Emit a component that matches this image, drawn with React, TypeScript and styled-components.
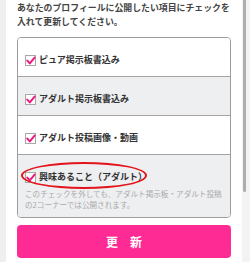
import React from "react";
import styled, { createGlobalStyle } from "styled-components";

const items = [
  { label: "ピュア掲示板書込み", shaded: false },
  { label: "アダルト掲示板書込み", shaded: true },
  { label: "アダルト投稿画像・動画", shaded: false },
];

const GlobalStyle = createGlobalStyle`
  html, body {
    margin: 0;
    padding: 0;
    background: #ffffff;
  }
  body {
    font-family: "Noto Sans CJK JP", "Noto Sans", sans-serif;
  }
`;

const CheckIcon: React.FC = () => (
  <svg width="11" height="11" viewBox="0 0 11 11">
    <rect x="0.5" y="0.5" width="10" height="10" fill="#fff" stroke="#a8a8a8" />
    <path
      d="M2.3 5.6 L4.8 8.4 L9.6 2.6"
      fill="none"
      stroke="#f0197d"
      strokeWidth="2"
      strokeLinecap="round"
      strokeLinejoin="round"
    />
  </svg>
);

export default function App() {
  return (
    <>
      <GlobalStyle />
      <Page>
        <Gutter />
        <Main>
          <Lead>
            あなたのプロフィールに公開したい項目にチェックを入れて更新してください。
          </Lead>
          <OptionBox>
            {items.map((item) => (
              <OptionRow key={item.label} $shaded={item.shaded}>
                <Label>
                  <CheckIcon />
                  <span>{item.label}</span>
                </Label>
              </OptionRow>
            ))}
            <OptionRow $shaded>
              <Label>
                <CheckIcon />
                <span>興味あること（アダルト）</span>
              </Label>
              <Note>
                このチェックを外しても、アダルト掲示板・アダルト投稿の2コーナーでは公開されます。
              </Note>
              <Circle />
            </OptionRow>
          </OptionBox>
          <SubmitButton type="button">更新</SubmitButton>
        </Main>
        <ScrollTrack>
          <ScrollThumb />
        </ScrollTrack>
      </Page>
    </>
  );
}

const Page = styled.div`
  display: flex;
  width: 250px;
  height: 262px;
  overflow: hidden;
`;

const Gutter = styled.div`
  width: 6px;
  flex-shrink: 0;
  background: #efefef;
`;

const Main = styled.div`
  flex: 1;
  padding: 1px 11px 0 11px;
  background: #fff;
`;

const Lead = styled.p`
  margin: 0 0 8px;
  font-size: 8.9px;
  line-height: 14px;
  font-weight: 700;
  color: #444;
`;

const OptionBox = styled.div`
  border: 1px solid #9c9c9c;
  border-radius: 4px;
  overflow: hidden;
`;

const OptionRow = styled.div<{ $shaded?: boolean }>`
  position: relative;
  padding: 16px 7px 10px;
  background: ${({ $shaded }) => ($shaded ? "#eeeff1" : "#fff")};
  border-top: 1px solid #a4a4a4;

  &:first-child {
    border-top: none;
  }

  &:last-child {
    padding-bottom: 7px;
  }
`;

const Label = styled.label`
  display: flex;
  align-items: center;
  gap: 3px;
  height: 12px;
  font-size: 9px;
  line-height: 12px;
  font-weight: 700;
  color: #333;
`;

const Note = styled.p`
  margin: 5px 0 0;
  font-size: 7.6px;
  line-height: 11px;
  color: #aaa;
`;

const Circle = styled.div`
  position: absolute;
  left: 3px;
  top: 7px;
  width: 122px;
  height: 23px;
  border: 2px solid #e3141c;
  border-radius: 50%;
  pointer-events: none;
`;

const SubmitButton = styled.button`
  display: block;
  width: 100%;
  height: 33px;
  margin-top: 7px;
  border: none;
  border-radius: 4px;
  background: #ff2b94;
  color: #fff;
  font-family: "Noto Sans CJK JP", sans-serif;
  font-size: 12px;
  font-weight: 700;
  letter-spacing: 12px;
  text-indent: 12px;
`;

const ScrollTrack = styled.div`
  width: 7px;
  flex-shrink: 0;
  background: #f3f3f3;
  padding-left: 1px;
`;

const ScrollThumb = styled.div`
  width: 3px;
  height: 192px;
  background: #aeaeae;
  border-radius: 0 0 2px 2px;
`;
